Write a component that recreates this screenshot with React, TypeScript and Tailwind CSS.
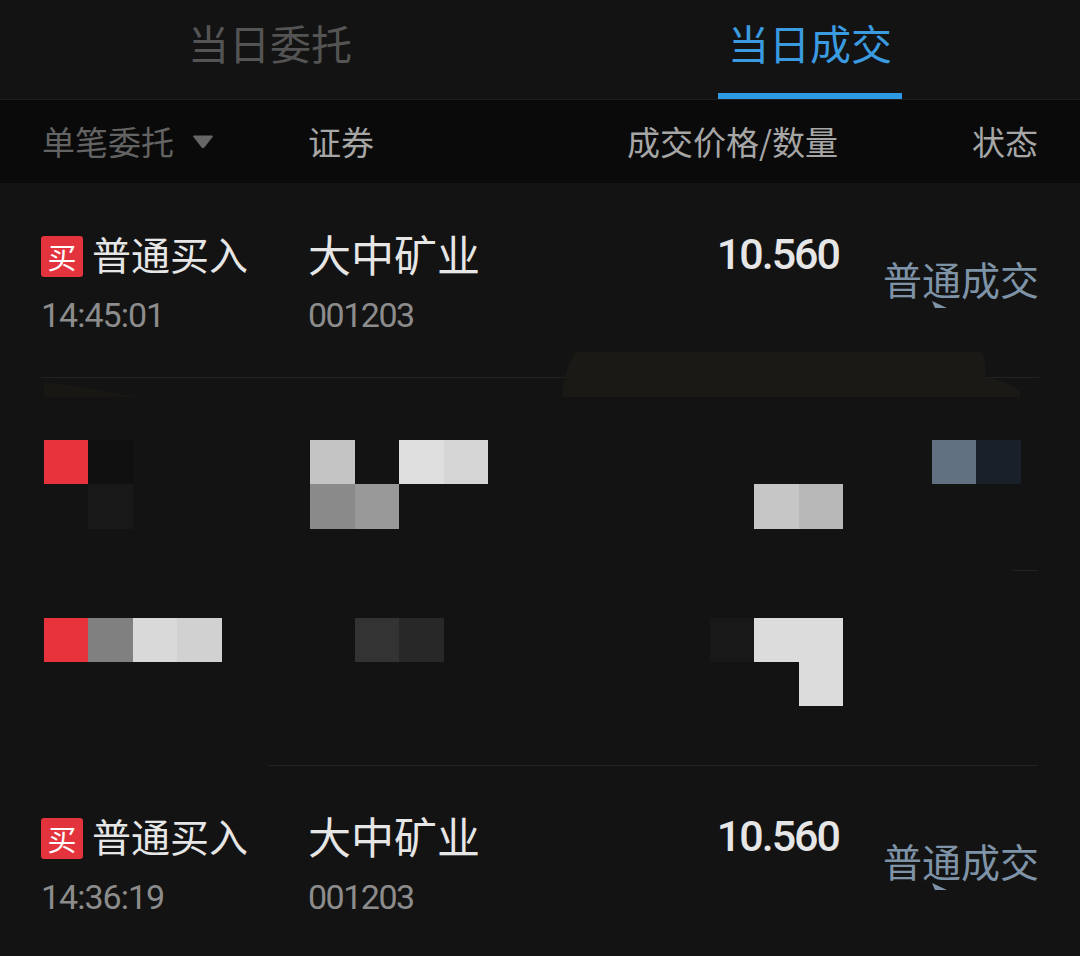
import React from 'react';

const cjk = "font-['Noto_Sans_CJK_SC',sans-serif]";
const num = "font-['Roboto','Noto_Sans_CJK_SC',sans-serif]";

const trades = [
  { time: '14:45:01', name: '大中矿业', code: '001203', price: '10.560' },
  { time: '14:36:19', name: '大中矿业', code: '001203', price: '10.560' },
];

// mosaic cells, 44.4px grid starting at x=44
const cells = [
  { cls: 'col-start-1 row-start-1', color: 'bg-[#e8333d]' },
  { cls: 'col-start-2 row-start-1', color: 'bg-[#101010]' },
  { cls: 'col-start-7 row-start-1', color: 'bg-[#c4c4c4]' },
  { cls: 'col-start-9 row-start-1', color: 'bg-[#dedede]' },
  { cls: 'col-start-10 row-start-1', color: 'bg-[#d5d5d5]' },
  { cls: 'col-start-21 row-start-1', color: 'bg-[#617182]' },
  { cls: 'col-start-22 row-start-1', color: 'bg-[#1a2029]' },
  { cls: 'col-start-2 row-start-2', color: 'bg-[#181818]' },
  { cls: 'col-start-7 row-start-2', color: 'bg-[#8a8a8a]' },
  { cls: 'col-start-8 row-start-2', color: 'bg-[#999999]' },
  { cls: 'col-start-17 row-start-2', color: 'bg-[#c6c6c6]' },
  { cls: 'col-start-18 row-start-2', color: 'bg-[#b8b8b8]' },
  { cls: 'col-start-1 row-start-5', color: 'bg-[#e8333d]' },
  { cls: 'col-start-2 row-start-5', color: 'bg-[#808080]' },
  { cls: 'col-start-3 row-start-5', color: 'bg-[#d9d9d9]' },
  { cls: 'col-start-4 row-start-5', color: 'bg-[#d1d1d1]' },
  { cls: 'col-start-8 row-start-5', color: 'bg-[#333333]' },
  { cls: 'col-start-9 row-start-5', color: 'bg-[#282828]' },
  { cls: 'col-start-16 row-start-5', color: 'bg-[#181818]' },
  { cls: 'col-start-17 row-start-5', color: 'bg-[#dcdcdc]' },
  { cls: 'col-start-18 row-start-5', color: 'bg-[#dcdcdc]' },
  { cls: 'col-start-18 row-start-6', color: 'bg-[#dcdcdc]' },
];

function TradeRow({ trade, top }: { trade: (typeof trades)[number]; top: string }) {
  return (
    <div className={`flex h-[194px] px-[41px] ${top}`}>
      <div className="flex w-[267px] flex-col">
        <div className="flex h-[42px] items-center">
          <span className="flex h-[41px] w-[42px] items-center justify-center rounded-[3px] bg-[#e3343d] text-[29px] leading-none text-white">
            买
          </span>
          <span className="-mt-[6px] ml-[9px] text-[39px] leading-[42px] text-[#e6e6e6]">普通买入</span>
        </div>
        <div className={`mt-[20px] text-[34px] leading-[36px] tracking-[-1px] text-[#8c8c8c] ${num}`}>
          {trade.time}
        </div>
      </div>
      <div className="flex w-[260px] flex-col">
        <div className="flex h-[42px] items-center">
          <span className="-mt-[6px] text-[43px] leading-[42px] text-[#e6e6e6]">{trade.name}</span>
        </div>
        <div className={`mt-[20px] text-[34px] leading-[36px] tracking-[-1.5px] text-[#8c8c8c] ${num}`}>
          {trade.code}
        </div>
      </div>
      <div className={`-mt-[1px] flex-1 text-right text-[43px] font-medium leading-[40px] tracking-[-2px] text-[#e6e6e6] ${num}`}>
        {trade.price}
      </div>
      <div className="relative w-[200px] pt-[22px] text-right text-[39px] leading-[42px] text-[#7e93a8]">
        普通成交
        <svg className="absolute right-[92px] top-[66px]" width="15" height="7" viewBox="0 0 15 7">
          <polygon points="0,0 15,7 3,7" fill="#7e93a8" />
        </svg>
      </div>
    </div>
  );
}

export default function App() {
  return (
    <div className={`h-[956px] w-[1080px] overflow-hidden bg-[#131313] ${cjk}`}>
      {/* tabs */}
      <div className="flex h-[100px] border-b border-[#1e1e1e]">
        <div className="flex flex-1 flex-col items-center">
          <div className="text-[41px] leading-[84px] text-[#545454]">当日委托</div>
        </div>
        <div className="flex flex-1 flex-col items-center">
          <div className="text-[41px] leading-[84px] text-[#3a9be0]">当日成交</div>
          <div className="mt-[9px] h-[6px] w-[184px] bg-[#2f98e3]" />
        </div>
      </div>

      {/* column header */}
      <div className="flex h-[83px] items-center bg-[#0a0a0a] px-[42px] text-[33px] text-[#a6a6a6]">
        <div className="flex w-[266px] items-center text-[#636363]">
          单笔委托
          <svg className="ml-[18px]" width="22" height="15" viewBox="0 0 22 15">
            <path d="M2 1.5 H20 Q21.5 1.5 20.6 3 L12.3 13.6 Q11 15 9.7 13.6 L1.4 3 Q0.5 1.5 2 1.5 Z" fill="#666" />
          </svg>
        </div>
        <div className="w-[260px]">证券</div>
        <div className="flex-1 text-right">成交价格/数量</div>
        <div className="w-[200px] text-right">状态</div>
      </div>

      <div>
        <TradeRow trade={trades[0]} top="pt-[52px]" />
        <div className="mx-[41px] h-px bg-[#222222]" />

        {/* pixelated row */}
        <div className="relative h-[387px]">
          <svg className="absolute left-[562px] top-[-26px]" width="458" height="45" viewBox="0 0 458 45">
            <path d="M0 45 C2 25 6 10 14 0 L420 0 C423 8 424 16 424 25 C440 28 452 34 458 40 L458 45 Z" fill="#1a1916" />
          </svg>
          <svg className="absolute left-[44px] top-[5px]" width="100" height="14" viewBox="0 0 100 14">
            <path d="M0 14 L0 0 C30 1 60 8 96 14 Z" fill="#181714" />
          </svg>
          <div className="absolute right-[42px] top-[192px] h-px w-[25px] bg-[#222222]" />
          <div className="grid grid-cols-[repeat(22,44.4px)] grid-rows-[repeat(6,44.4px)] pl-[44px] pt-[62px]">
            {cells.map((c, i) => (
              <div key={i} className={`${c.cls} ${c.color}`} />
            ))}
          </div>
        </div>
        <div className="ml-[268px] mr-[42px] h-px bg-[#222222]" />

        <TradeRow trade={trades[1]} top="pt-[51px]" />
      </div>
    </div>
  );
}
